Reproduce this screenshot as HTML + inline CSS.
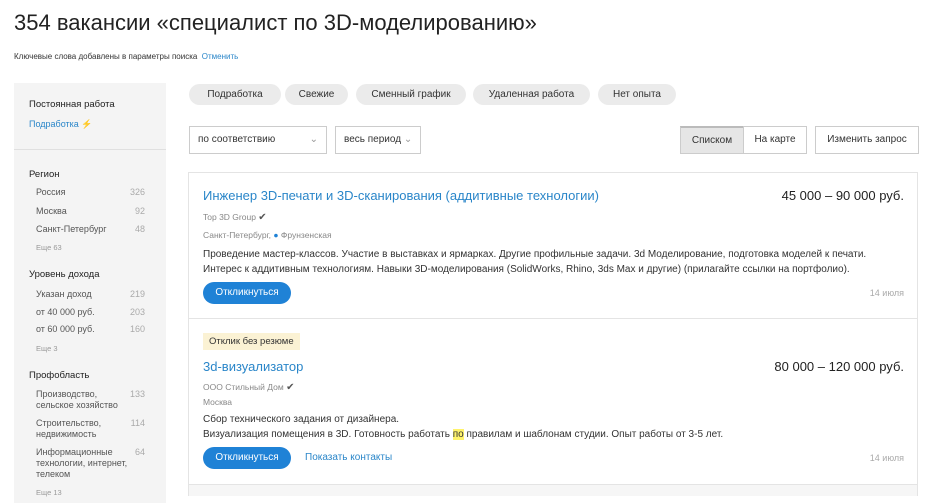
<!DOCTYPE html>
<html><head><meta charset="utf-8"><style>
*{box-sizing:border-box;margin:0;padding:0}
body{width:938px;height:496px;overflow:hidden;background:#fff;font-family:"Liberation Sans",Arial,sans-serif;color:#333;position:relative}
.a{position:absolute;white-space:nowrap}
h1{position:absolute;left:14px;top:10px;font-size:22px;font-weight:normal;color:#222}
.side{position:absolute;left:14px;top:83px;width:152px;height:420px;background:#f4f4f4}
.s{font-size:9px;color:#555}
.n{font-size:9px;color:#aaa;text-align:right}
.h{font-size:9.5px;color:#222}
.chip{position:absolute;top:84px;height:21px;border-radius:11px;background:#ebebeb;font-size:10px;line-height:21px;text-align:center;color:#333}
.dd{position:absolute;top:126px;height:28px;border:1px solid #ccc;font-size:10px;line-height:26px;padding-left:8px;color:#333}
.btn{position:absolute;top:126px;height:28px;border:1px solid #ccc;font-size:10px;line-height:26px;text-align:center}
.card{position:absolute;left:188px;width:730px;border:1px solid #e4e4e4}
.t{font-size:13px;color:#2a86c9}
.sal{font-size:13px;color:#222;text-align:right}
.g{font-size:8.5px;color:#888}
.d{font-size:10px;color:#333;line-height:15px}
.ob{position:absolute;height:22px;width:88px;border-radius:11px;background:#1f82d6;color:#fff;font-size:10px;line-height:22px;text-align:center}
</style></head><body>
<h1>354 вакансии «специалист по 3D-моделированию»</h1>
<div class="a" style="left:14px;top:52px;font-size:8px;color:#333">Ключевые слова добавлены в параметры поиска &nbsp;<span style="color:#2a86c9">Отменить</span></div>

<div class="side"></div>
<div class="a" style="left:14px;top:149px;width:152px;height:1px;background:#e0e0e0"></div>
<div class="a h" style="left:29px;top:99px">Постоянная работа</div>
<div class="a" style="left:29px;top:119px;font-size:9px;color:#2a86c9">Подработка <span style="color:#f5c518">⚡</span></div>

<div class="a h" style="left:29px;top:169px">Регион</div>
<div class="a s" style="left:36px;top:187px">Россия</div><div class="a n" style="left:110px;width:35px;top:187px">326</div>
<div class="a s" style="left:36px;top:206px">Москва</div><div class="a n" style="left:110px;width:35px;top:206px">92</div>
<div class="a s" style="left:36px;top:224px">Санкт-Петербург</div><div class="a n" style="left:110px;width:35px;top:224px">48</div>
<div class="a" style="left:36px;top:243px;font-size:7.5px;color:#999">Еще 63</div>

<div class="a h" style="left:29px;top:269px">Уровень дохода</div>
<div class="a s" style="left:36px;top:289px">Указан доход</div><div class="a n" style="left:110px;width:35px;top:289px">219</div>
<div class="a s" style="left:36px;top:307px">от 40 000 руб.</div><div class="a n" style="left:110px;width:35px;top:307px">203</div>
<div class="a s" style="left:36px;top:324px">от 60 000 руб.</div><div class="a n" style="left:110px;width:35px;top:324px">160</div>
<div class="a" style="left:36px;top:344px;font-size:7.5px;color:#999">Еще 3</div>

<div class="a h" style="left:29px;top:370px">Профобласть</div>
<div class="a s" style="left:36px;top:389px;line-height:11px">Производство,<br>сельское хозяйство</div><div class="a n" style="left:110px;width:35px;top:389px">133</div>
<div class="a s" style="left:36px;top:418px;line-height:11px">Строительство,<br>недвижимость</div><div class="a n" style="left:110px;width:35px;top:418px">114</div>
<div class="a s" style="left:36px;top:447px;line-height:11px">Информационные<br>технологии, интернет,<br>телеком</div><div class="a n" style="left:110px;width:35px;top:447px">64</div>
<div class="a" style="left:36px;top:488px;font-size:7.5px;color:#999">Еще 13</div>

<div class="chip" style="left:189px;width:92px">Подработка</div>
<div class="chip" style="left:285px;width:63px">Свежие</div>
<div class="chip" style="left:356px;width:110px">Сменный график</div>
<div class="chip" style="left:473px;width:117px">Удаленная работа</div>
<div class="chip" style="left:598px;width:78px">Нет опыта</div>

<div class="dd" style="left:189px;width:138px">по соответствию<span style="position:absolute;right:8px;color:#999">⌄</span></div>
<div class="dd" style="left:335px;width:86px">весь период <span style="color:#999">⌄</span></div>
<div class="btn" style="left:680px;width:64px;background:#e6e6e6;border-top:2px solid #bbb">Списком</div>
<div class="btn" style="left:743px;width:64px">На карте</div>
<div class="btn" style="left:815px;width:104px">Изменить запрос</div>

<div class="card" style="top:172px;height:147px"></div>
<div class="a t" style="left:203px;top:188px">Инженер 3D-печати и 3D-сканирования (аддитивные технологии)</div>
<div class="a sal" style="right:34px;top:188px">45 000 – 90 000 руб.</div>
<div class="a g" style="left:203px;top:212px">Top 3D Group <span style="color:#555;font-size:10px">✔</span></div>
<div class="a g" style="left:203px;top:230px">Санкт-Петербург, <span style="color:#1f82d6">●</span> Фрунзенская</div>
<div class="a d" style="left:203px;top:247px">Проведение мастер-классов. Участие в выставках и ярмарках. Другие профильные задачи. 3d Моделирование, подготовка моделей к печати.<br>Интерес к аддитивным технологиям. Навыки 3D-моделирования (SolidWorks, Rhino, 3ds Max и другие) (прилагайте ссылки на портфолио).</div>
<div class="ob" style="left:203px;top:282px">Откликнуться</div>
<div class="a" style="right:34px;top:288px;font-size:9px;color:#aaa">14 июля</div>

<div class="card" style="top:318px;height:167px"></div>
<div class="a" style="left:203px;top:333px;height:17px;padding:0 6px;background:#fbf2d4;font-size:9.5px;line-height:17px;color:#333">Отклик без резюме</div>
<div class="a t" style="left:203px;top:359px">3d-визуализатор</div>
<div class="a sal" style="right:34px;top:359px">80 000 – 120 000 руб.</div>
<div class="a g" style="left:203px;top:382px">ООО Стильный Дом <span style="color:#555;font-size:10px">✔</span></div>
<div class="a g" style="left:203px;top:397px">Москва</div>
<div class="a d" style="left:203px;top:412px">Сбор технического задания от дизайнера.<br>Визуализация помещения в 3D. Готовность работать <span style="background:#fff36b">по</span> правилам и шаблонам студии. Опыт работы от 3-5 лет.</div>
<div class="ob" style="left:203px;top:447px">Откликнуться</div>
<div class="a" style="left:305px;top:452px;font-size:10px;color:#2a86c9">Показать контакты</div>
<div class="a" style="right:34px;top:453px;font-size:9px;color:#aaa">14 июля</div>
<div class="a" style="left:188px;top:485px;width:730px;height:11px;background:#f6f6f6;border-left:1px solid #e4e4e4;border-right:1px solid #e4e4e4"></div>
</body></html>
